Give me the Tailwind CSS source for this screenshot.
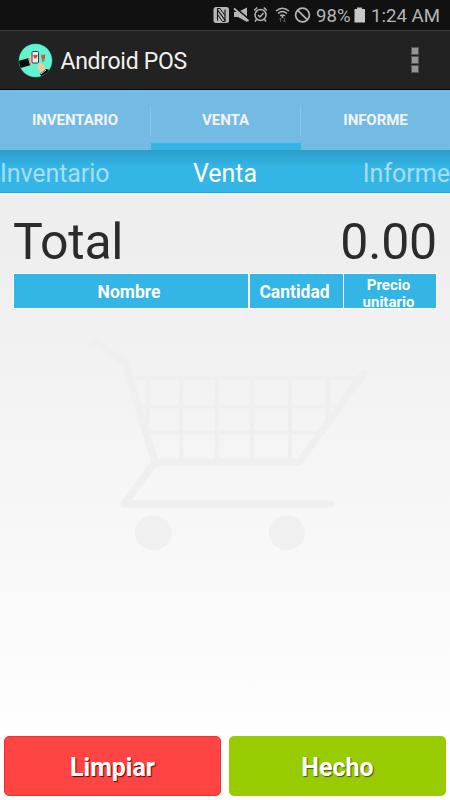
<!DOCTYPE html>
<html lang="es">
<head>
<meta charset="utf-8">
<title>Android POS</title>
<script src="https://cdn.jsdelivr.net/npm/@tailwindcss/browser@4"></script>
</head>
<body class="w-[450px] h-[800px] overflow-hidden flex flex-col font-['Roboto',sans-serif] bg-linear-to-b from-[#eeeeee] from-30% to-white to-95%">
  <!-- Status bar -->
  <div class="h-[30px] shrink-0 bg-[#111] flex items-center justify-end pr-[9px] leading-none whitespace-nowrap">
    <svg class="w-[156px] h-[30px] shrink-0" viewBox="211 0 156 30" fill="none" stroke="#b5b5b5">
      <rect x="213.5" y="7" width="15.5" height="16" rx="2.5" fill="#b5b5b5" stroke="none"/>
      <path d="M217.500 20.500V10L225 20V9.500" stroke="#111" stroke-width="1.100"/>
      <path d="M217.500 10V8.500h2.500l5 7M225 20v1.500h-2.500l-5-7" stroke="#111" stroke-width="1"/>
      <path d="M234 12h4l9-4.500V22l-9-5h-4z" fill="#b5b5b5" stroke="none"/>
      <path d="M235 7.500L249 19.500" stroke="#111" stroke-width="1.800"/>
      <path d="M234 8.500L248.500 21" stroke-width="1.800"/>
      <circle cx="260.500" cy="15" r="5.500" stroke-width="1.500"/>
      <path d="M254.200 10.500l3-3M266.800 10.500l-3-3M256.500 19.500l-1.500 2M264.500 19.500l1.500 2M258 15l2 2 3.500-4" stroke-width="1.500"/>
      <path d="M276 11q6.500-5.500 13 0M278 13.500q4.500-4 9 0M280.200 16q2.300-2 4.600 0" stroke-width="1.500"/>
      <circle cx="282.500" cy="17" r="1" fill="#b5b5b5" stroke="none"/>
      <path d="M280.500 22v-4m-1.500 1.500l1.500-1.500 1.500 1.500M284.500 18v4m-1.500-1.500l1.500 1.500 1.500-1.500" stroke="#555" stroke-width="1"/>
      <circle cx="302.500" cy="15" r="6.900" stroke-width="1.700"/>
      <path d="M297.800 10.300l9.400 9.400" stroke-width="1.700"/>
      <path d="M354.500 9h2.500V7.500h5V9h3v13.500h-10.500z" fill="#c8c8c8" stroke="none"/>
      <text x="316" y="22" font-size="19" fill="#b5b5b5" stroke="none" textLength="34.500" lengthAdjust="spacingAndGlyphs">98%</text>
    </svg>
    <svg class="w-[74px] h-[30px] shrink-0" viewBox="367 0 74 30"><text x="371" y="22" font-size="19" fill="#b5b5b5" textLength="69" lengthAdjust="spacingAndGlyphs">1:24 AM</text></svg>
  </div>
  <!-- Action bar -->
  <div class="h-[60px] shrink-0 bg-[#222] border-t border-[#3a3a3a] border-b border-b-black flex items-center pl-[18px] pr-[32px]">
    <svg class="w-[35px] h-[35px] shrink-0" viewBox="0 0 35 35">
      <defs><clipPath id="disc"><circle cx="17.500" cy="17.500" r="16.500"/></clipPath></defs>
      <circle cx="17.500" cy="17.500" r="17" fill="#24736a"/>
      <g clip-path="url(#disc)">
        <rect width="35" height="35" fill="#62f4d0"/>
        <path d="M10 17l3-6 3-2v11l-5 2z" fill="#fbc59c"/>
        <path d="M20 20l5 1 2 4 2 3-4 4-5-6z" fill="#fbc59c"/>
        <path d="M0 18l11-3 2 7-12 3.500zM22 31l6-5 8 2-4 8h-7z" fill="#080808"/>
        <path d="M10.500 15.500l2 6.500M23 31l5-4" stroke="#fff" stroke-width=".8"/>
        <rect x="14" y="8.500" width="6.500" height="11.500" rx="1" fill="#eef" stroke="#38333c"/>
        <path d="M15 12.500l1.500-1 .8 1 .8-1 1.500 1-1.500 3h-1.500z" fill="#e8391c"/>
        <path d="M23 12l1.500-.5v1l2.500-1.500v5l-2.500 1-1-2z" fill="#e2502c"/>
        <path d="M23.500 16l3.500 1-2 2.500z" fill="#5d8c80"/>
      </g>
    </svg>
    <span class="ml-[7.500px] text-[23px] tracking-[-0.3px] leading-[30px] text-[#f1f1f1] whitespace-nowrap mt-[4px]">Android POS</span>
    <div class="ml-auto flex flex-col gap-[3px] -mt-px">
      <i class="w-[6px] h-[6px] bg-[#969696] shadow-[0_0_0_1px_#555]"></i>
      <i class="w-[6px] h-[6px] bg-[#969696] shadow-[0_0_0_1px_#555]"></i>
      <i class="w-[6px] h-[6px] bg-[#969696] shadow-[0_0_0_1px_#555]"></i>
    </div>
  </div>
  <!-- Tabs -->
  <nav class="h-[60px] shrink-0 grid grid-cols-[151px_150px_149px] grid-rows-[58px] bg-[#73bbe4] border-t-2 border-[#6dbdec] text-[#f3f3f3] font-bold text-[15px] tracking-[-0.05px] text-center">
    <div class="flex items-start"><span class="flex-1 leading-[57px]">INVENTARIO</span><i class="w-px h-[30px] mt-[14px] bg-[#86c6eb]"></i></div>
    <div class="flex items-start border-b-[7px] border-[#33b5e5]"><span class="flex-1 leading-[57px]">VENTA</span><i class="w-px h-[30px] mt-[14px] bg-[#86c6eb]"></i></div>
    <div class="leading-[57px]">INFORME</div>
  </nav>
  <!-- Pager titles -->
  <div class="h-[43px] shrink-0 bg-linear-to-b from-[#2b9dc7] to-[#33b5e5] to-40% border-b border-[#16acdf] grid grid-cols-3 text-[25px] leading-[48px] text-[#a6def5] whitespace-nowrap">
    <span class="tracking-[-0.08px]">Inventario</span>
    <span class="text-center text-white">Venta</span>
    <span class="text-right">Informe</span>
  </div>
  <!-- Sale content -->
  <main class="flex-1 px-[13px] pt-[20px]">
    <div class="flex justify-between text-[50px] leading-[58px] text-[#2b2b2b]">
      <span class="tracking-[-0.3px]">Total</span><span class="tracking-[-0.2px]">0.00</span>
    </div>
    <div class="mt-[2px] h-[36px] w-[424px] bg-white/90 p-px grid grid-cols-[234px_93px_92px] grid-rows-[34px] gap-x-[1.500px] text-white font-bold text-[17.500px] text-center">
      <div class="bg-[#33b5e5] leading-[37px] pr-[4px]">Nombre</div>
      <div class="bg-[#33b5e5] leading-[37px] pr-[3px] whitespace-nowrap">Cantidad</div>
      <div class="bg-[#33b5e5] text-[15px] leading-[17.500px] pt-[2.500px] pr-[3px] overflow-hidden">Precio<br>unitario</div>
    </div>
    <svg class="w-[300px] h-[240px] ml-[67px] mt-[16px]" viewBox="0 0 900 720" fill="none" stroke="#efefef" stroke-linecap="round" stroke-linejoin="round">
      <path d="M43 49L135 113 225 412H657L852 143" stroke-width="22"/>
      <path d="M225 412L132 537H750" stroke-width="22"/>
      <path d="M160 159H835M185 245H770M205 323H715" stroke-width="11"/>
      <path d="M203 160V290M304 160V405M411 160V405M516 160V405M630 160V405M743 160V285" stroke-width="13"/>
      <ellipse cx="220" cy="623" rx="55" ry="52" fill="#f0f0f0" stroke="none"/>
      <ellipse cx="620" cy="623" rx="54" ry="52" fill="#f0f0f0" stroke="none"/>
    </svg>
  </main>
  <!-- Actions -->
  <footer class="h-[64px] shrink-0 grid grid-cols-2 gap-2 px-1 pb-[4px] text-white font-bold text-[25px] text-center">
    <button class="rounded-[5px] bg-[#ff4444] border border-[#ff2c2c] pt-[3px] [text-shadow:1px_1px_1px_#6b0000]">Limpiar</button>
    <button class="rounded-[5px] bg-[#99cc00] pt-[3px] [text-shadow:1px_1px_1px_#405500]">Hecho</button>
  </footer>
</body>
</html>
